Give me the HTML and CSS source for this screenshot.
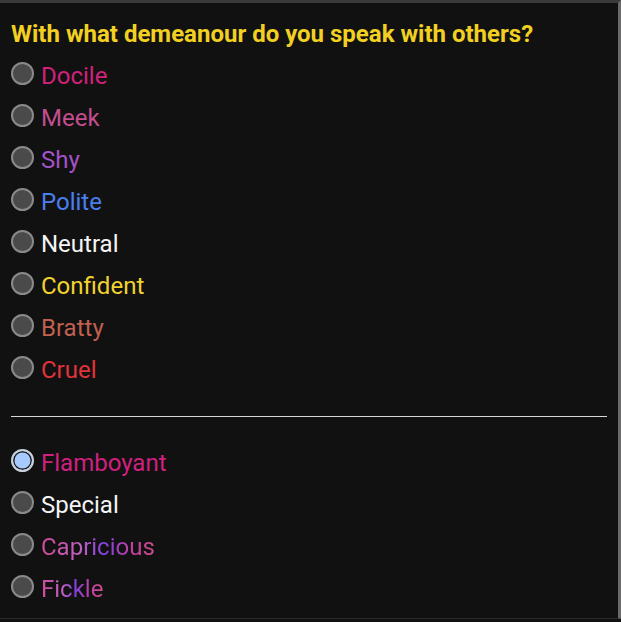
FILE: index.html
```html
<!DOCTYPE html>
<html>
<head>
<meta charset="utf-8">
<link rel="stylesheet" href="styles.css">
</head>
<body>
<div class="frame">
  <h1 class="title">With what demeanour do you speak with others?</h1>
  <div class="group">
    <label class="opt"><span class="radio"></span><span class="txt c-docile">Docile</span></label>
    <label class="opt"><span class="radio"></span><span class="txt c-meek">Meek</span></label>
    <label class="opt"><span class="radio"></span><span class="txt c-shy">Shy</span></label>
    <label class="opt"><span class="radio"></span><span class="txt c-polite">Polite</span></label>
    <label class="opt"><span class="radio"></span><span class="txt c-neutral">Neutral</span></label>
    <label class="opt"><span class="radio"></span><span class="txt c-confident">Confident</span></label>
    <label class="opt"><span class="radio"></span><span class="txt c-bratty">Bratty</span></label>
    <label class="opt"><span class="radio"></span><span class="txt c-cruel">Cruel</span></label>
  </div>
  <hr class="sep">
  <div class="group">
    <label class="opt"><span class="radio checked"></span><span class="txt c-flam">Flamboyant</span></label>
    <label class="opt"><span class="radio"></span><span class="txt c-neutral">Special</span></label>
    <label class="opt"><span class="radio"></span><span class="txt c-grad">Capricious</span></label>
    <label class="opt"><span class="radio"></span><span class="txt c-grad">Fickle</span></label>
  </div>
</div>
</body>
</html>
```
FILE: styles.css
```css
html, body {
  margin: 0;
  padding: 0;
  background: #111111;
}
.frame {
  width: 621px;
  height: 619px;
  box-sizing: border-box;
  border-top: 3px solid #3a3a3a;
  border-right: 3px solid #6a6a6a;
  border-bottom: 1px solid #2a2a2a;
  background: #111111;
  padding: 17px 0 0 11px;
  font-family: Roboto, "Liberation Sans", sans-serif;
}
.title {
  margin: 0;
  font-size: 24px;
  font-weight: 700;
  line-height: 28px;
  color: #f2d022;
}
.group {
  display: flex;
  flex-direction: column;
  margin-top: 7px;
}
.opt {
  display: flex;
  align-items: center;
  height: 42px;
  gap: 7px;
}
.radio {
  width: 23px;
  height: 23px;
  box-sizing: border-box;
  border-radius: 50%;
  border: 2px solid #8a8a8a;
  background: #4a4a4a;
  flex: none;
  margin-top: -6px;
}
.radio.checked {
  border: 2px solid #c8d0dc;
  background: #a8cbff;
  box-shadow: inset 0 0 0 1.5px #1a1a1a;
}
.txt {
  font-size: 24px;
  line-height: 28px;
}
.sep {
  margin: 25px 11px 25px 0;
  border: 0;
  border-top: 1px solid #d8d8d8;
  height: 0;
}
.group + .sep + .group {
  margin-top: 0;
}
.c-docile { color: #d1217a; }
.c-meek { color: #c44d8e; }
.c-shy { color: #a552c8; }
.c-polite { color: #4a7ff0; }
.c-neutral { color: #f4f4f4; }
.c-confident { color: #f2d32f; }
.c-bratty { color: #c0604f; }
.c-cruel { color: #e0333a; }
.c-flam { color: #d02080; }
.c-grad {
  background: linear-gradient(90deg, #d04a9a 0%, #c060c0 35%, #8040e0 55%, #c040a0 80%, #d04a8a 100%);
  -webkit-background-clip: text;
  background-clip: text;
  color: transparent;
}
```
